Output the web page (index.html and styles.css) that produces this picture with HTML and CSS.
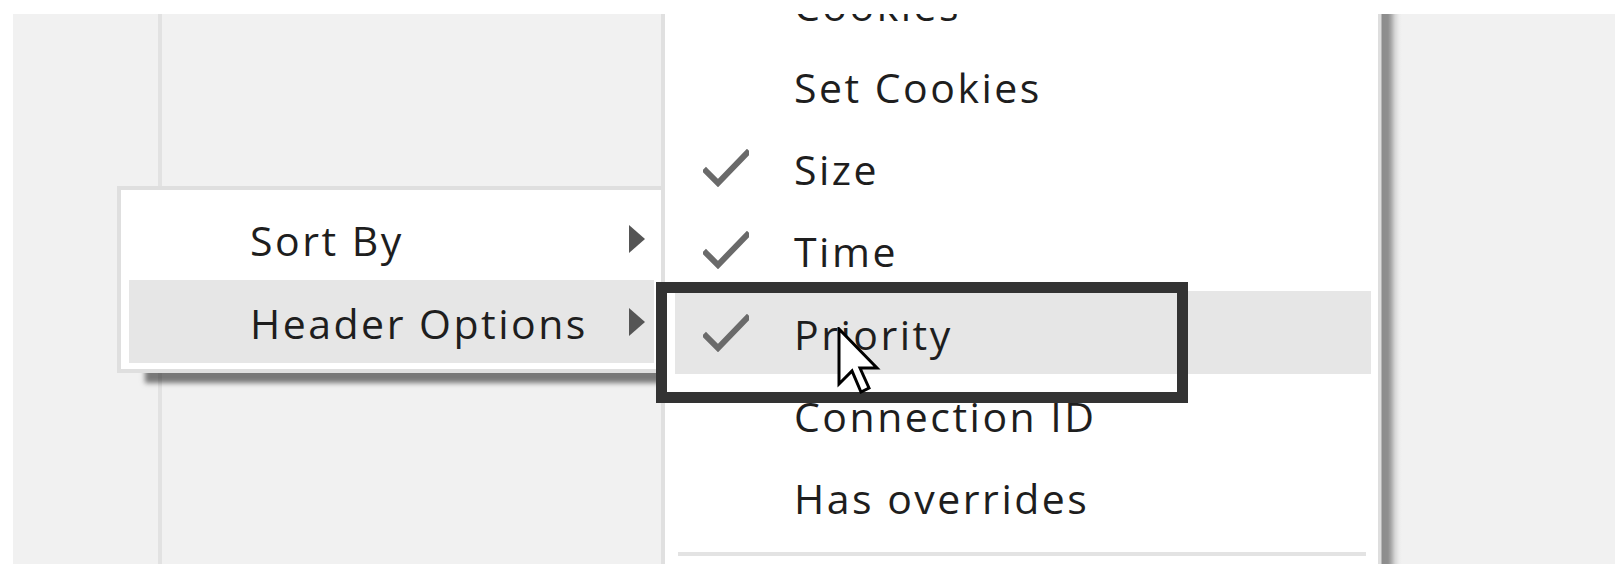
FILE: index.html
```html
<!DOCTYPE html>
<html>
<head>
<meta charset="utf-8">
<link rel="stylesheet" href="styles.css">
</head>
<body>
<div class="screen">
  <div class="col-left"></div>
  <div class="col-main"></div>

  <div class="menu">
    <div class="item">
      <span class="label">Sort By</span>
      <span class="arrow"></span>
    </div>
    <div class="item hover">
      <span class="label">Header Options</span>
      <span class="arrow"></span>
    </div>
  </div>

  <div class="submenu">
    <div class="sitem"><span class="check"></span><span class="label">Cookies</span></div>
    <div class="sitem"><span class="check"></span><span class="label">Set Cookies</span></div>
    <div class="sitem"><span class="check"><svg viewBox="0 0 46 38" width="46" height="38"><polyline points="3,22 15,34 44,4" /></svg></span><span class="label">Size</span></div>
    <div class="sitem"><span class="check"><svg viewBox="0 0 46 38" width="46" height="38"><polyline points="3,22 15,34 44,4" /></svg></span><span class="label">Time</span></div>
    <div class="sitem hover"><span class="check"><svg viewBox="0 0 46 38" width="46" height="38"><polyline points="3,22 15,34 44,4" /></svg></span><span class="label">Priority</span></div>
    <div class="sitem"><span class="check"></span><span class="label">Connection ID</span></div>
    <div class="sitem"><span class="check"></span><span class="label">Has overrides</span></div>
    <div class="sep"></div>
  </div>

  <div class="focus-box"></div>

  <svg class="cursor" viewBox="0 0 44 69" width="44" height="69">
    <path d="M2,2 L2,57 L15,44 L24,65 L32,61 L23,41 L40,41 Z" />
  </svg>
</div>
</body>
</html>
```

FILE: styles.css
```css
* { box-sizing: border-box; }

html, body {
  margin: 0;
  padding: 0;
  background: #ffffff;
}

body {
  width: 1622px;
  height: 568px;
  overflow: hidden;
  font-family: "Open Sans", "Noto Sans", sans-serif;
}

.screen {
  position: relative;
  margin: 14px 0 0 13px;
  width: 1602px;
  height: 550px;
  background: #f1f1f1;
  overflow: hidden;
  display: flex;
}

.col-left {
  width: 149px;
  height: 100%;
  border-right: 4px solid #e2e2e2;
}

.col-main {
  flex: 1;
}

.label {
  letter-spacing: 2.5px;
  white-space: nowrap;
  line-height: 1;
  padding-top: 3px;
}

/* Left context menu */
.menu {
  position: absolute;
  left: 104px;
  top: 172px;
  width: 548px;
  height: 187px;
  background: #ffffff;
  border: 4px solid #dfdfdf;
  border-right-width: 3px;
  padding: 7px 8px 6px 8px;
  box-shadow: 25px 13px 5px -3px rgba(0, 0, 0, 0.5);
  z-index: 1;
}

.item {
  height: 83px;
  display: flex;
  align-items: center;
  justify-content: space-between;
  padding-left: 121px;
  padding-right: 9px;
  color: #1e1e1e;
  font-size: 41px;
}

.item.hover {
  background: #e6e6e6;
}

.arrow {
  width: 0;
  height: 0;
  border-top: 14px solid transparent;
  border-bottom: 14px solid transparent;
  border-left: 16px solid #555555;
}

/* Sub menu */
.submenu {
  position: absolute;
  left: 648px;
  top: -58px;
  width: 717px;
  height: 640px;
  background: #ffffff;
  border-left: 4px solid #e0e0e0;
  padding: 7px 7px 0 10px;
  z-index: 2;
}

.submenu::after {
  content: "";
  position: absolute;
  top: 0;
  bottom: 0;
  right: -24px;
  width: 24px;
  background: linear-gradient(to right, #dedede 0, #dedede 3px, #8c8c8c 4px, #8f8f8f 10px, #a8a8a8 13px, #d6d6d6 17px, #ececec 21px, #f1f1f1 24px);
}

.sitem {
  height: 82px;
  display: flex;
  align-items: center;
  color: #1e1e1e;
  font-size: 41px;
}

.sitem.hover {
  height: 83px;
  background: #e6e6e6;
}

.check {
  width: 119px;
  padding-left: 28px;
  display: flex;
  align-items: center;
}

.check svg polyline {
  fill: none;
  stroke: #6a6a6a;
  stroke-width: 6;
  stroke-linecap: square;
}

.sep {
  margin: 14px 5px 0 3px;
  height: 4px;
  background: #e3e3e3;
}

/* Annotation rectangle */
.focus-box {
  position: absolute;
  left: 643px;
  top: 268px;
  width: 532px;
  height: 121px;
  border: 11px solid #333333;
  z-index: 3;
}

.cursor {
  position: absolute;
  left: 824px;
  top: 313px;
  z-index: 4;
}

.cursor path {
  fill: #ffffff;
  stroke: #000000;
  stroke-width: 3;
  stroke-linejoin: miter;
}
```
